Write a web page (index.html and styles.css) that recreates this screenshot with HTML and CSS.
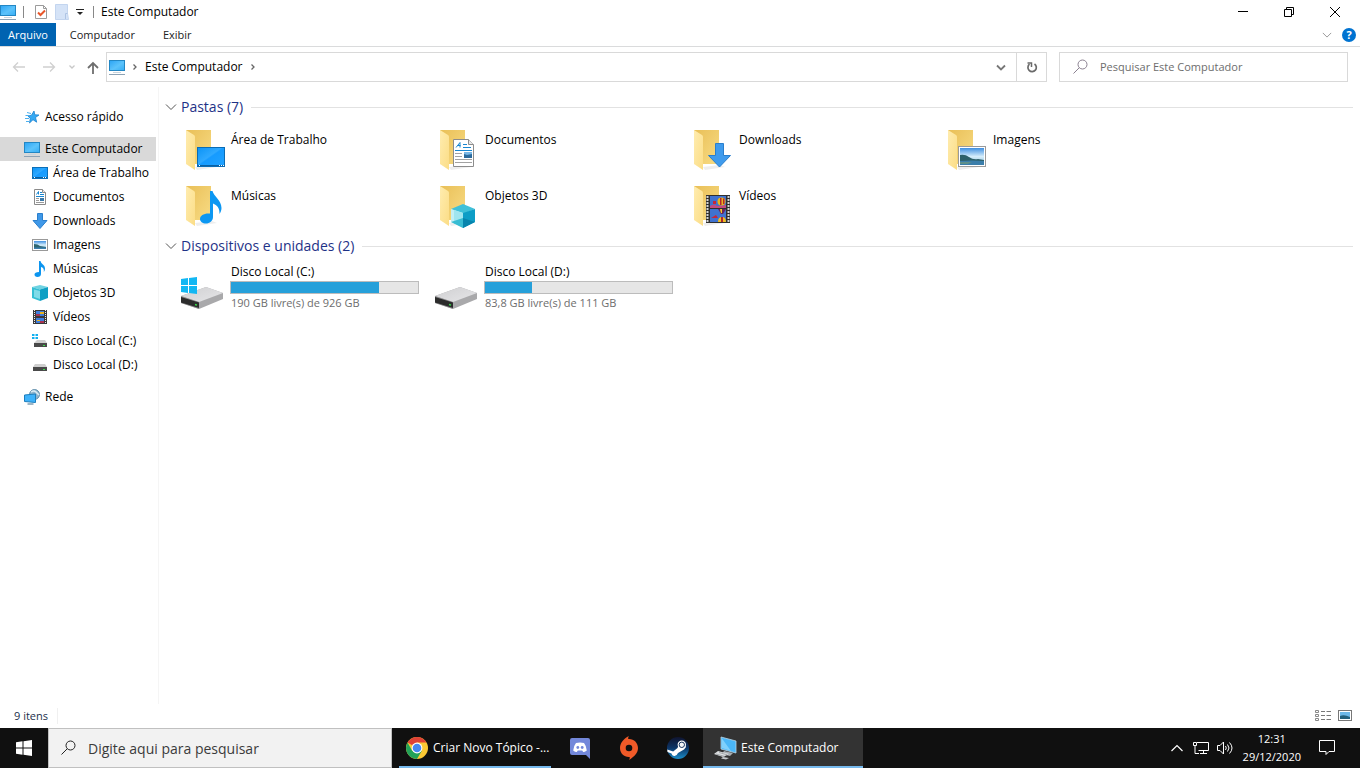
FILE: index.html
```html
<!DOCTYPE html>
<html lang="pt-BR">
<head>
    <meta charset="UTF-8">
    <meta name="viewport" content="width=device-width, initial-scale=1.0">
    <title>Este Computador</title>
    <link rel="stylesheet" href="styles.css">
</head>
<body>
    <!-- Shared icons -->
    <svg class="sprite" width="0" height="0" aria-hidden="true">
        <defs>
            <linearGradient id="gScreen" x1="0" y1="0" x2="1" y2="1">
                <stop offset="0" stop-color="#2ba4f5"/>
                <stop offset=".55" stop-color="#5cc3fb"/>
                <stop offset="1" stop-color="#34adf5"/>
            </linearGradient>
            <linearGradient id="gDesk" x1="0" y1="0" x2="1" y2="1">
                <stop offset="0" stop-color="#0b93f5"/>
                <stop offset=".45" stop-color="#2fa9ff"/>
                <stop offset=".5" stop-color="#169bff"/>
                <stop offset="1" stop-color="#22a3ff"/>
            </linearGradient>
            <linearGradient id="gBack" x1="0" y1="0" x2="1" y2="1">
                <stop offset="0" stop-color="#e9bf57"/>
                <stop offset="1" stop-color="#f8dc85"/>
            </linearGradient>
            <linearGradient id="gFlap" x1="0" y1="0" x2="1" y2="1">
                <stop offset="0" stop-color="#ffecaf"/>
                <stop offset="1" stop-color="#fbdd86"/>
            </linearGradient>
            <linearGradient id="gDriveTop" x1="0" y1="0" x2="1" y2="1">
                <stop offset="0" stop-color="#cfcfd1"/>
                <stop offset="1" stop-color="#e6e6e8"/>
            </linearGradient>
            <linearGradient id="gSky" x1="0" y1="0" x2="0" y2="1">
                <stop offset="0" stop-color="#3f8fe0"/>
                <stop offset=".5" stop-color="#d5edfb"/>
                <stop offset="1" stop-color="#8cc0dc"/>
            </linearGradient>
            <linearGradient id="gSteam" x1="0" y1="0" x2="0" y2="1">
                <stop offset="0" stop-color="#10142f"/>
                <stop offset=".5" stop-color="#0c3567"/>
                <stop offset="1" stop-color="#1b8ec9"/>
            </linearGradient>
        </defs>

        <symbol id="pc" viewBox="0 0 16 16">
            <rect x=".5" y="1.5" width="15" height="10" fill="url(#gScreen)" stroke="#2387c4"/>
            <path d="M0 15.5h16" stroke="#8ea3b5"/>
            <path d="M4 13.5h8" stroke="#c9d4dd"/>
        </symbol>
        <symbol id="desktop" viewBox="0 0 16 16">
            <rect x=".5" y="2.5" width="15" height="11" fill="url(#gDesk)" stroke="#0b6fb8"/>
            <path d="M1 12.5h14" stroke="#0b5f9e"/>
            <path d="M2 12.5h1M11 12.5h1M13 12.5h1" stroke="#fff"/>
        </symbol>
        <symbol id="doc" viewBox="0 0 16 16">
            <path d="M2.5 .5h8l3 3v12h-11z" fill="#fff" stroke="#8a8a8a"/>
            <path d="M10.5 .5v3h3" fill="#eee" stroke="#8a8a8a"/>
            <path d="M4.5 5.5l2-3v3M8 3.5h2M8 5.5h4M4 7.5h8" fill="none" stroke="#1886d0"/>
            <path d="M4 9.500h3M4 11.5h3M4 13.5h8" stroke="#9a9a9a"/>
            <path d="M8 9h4v3H8z" fill="#3a78a8"/>
        </symbol>
        <symbol id="down" viewBox="0 0 16 16">
            <path d="M5.5 .5h5v7H15l-7 8-7-8h4.5z" fill="#3f98e8" stroke="#2a7fcd"/>
        </symbol>
        <symbol id="pic" viewBox="0 0 16 16">
            <rect x=".5" y="2.5" width="15" height="11" fill="#fff" stroke="#999"/>
            <path d="M2 4h12v8H2z" fill="url(#gSky)"/>
            <path d="M2 7q4 0 6 2l6 1v2H2z" fill="#2e6670"/>
            <path d="M2 10.5h12V12H2z" fill="#3c7fae"/>
        </symbol>
        <symbol id="note" viewBox="0 0 16 16">
            <path d="M7 0h1.500c.5 3 4.500 3.500 4.500 7.500 0 1.500-.5 2.500-1.200 3.500.5-3-.8-4.500-2.800-5v7c0 1.800-1.500 3-3.500 3S2.500 15 2.500 13.500 4 11 7 11z" fill="#0c95ef"/>
        </symbol>
        <symbol id="cube" viewBox="0 0 16 16">
            <path d="M0 2l8-2 8 2-8 2.500z" fill="#6fd3e2"/>
            <path d="M0 2l8 2.500V16l-8-3z" fill="#35bfd4"/>
            <path d="M2 4.500l6 1.500v8l-6-2z" fill="#7fdbe8"/>
            <path d="M8 4.500L16 2v11l-8 3z" fill="#0e9fc4"/>
        </symbol>
        <symbol id="film" viewBox="0 0 16 16">
            <path d="M1 1h14v14H1z" fill="#3a3a3a"/>
            <path d="M4 2h8v5H4zM4 9h8v5H4z" fill="#3f7ddb"/>
            <path d="M2.500 1v14M13.500 1v14" stroke="#eee" stroke-dasharray="1 1"/>
            <path d="M8 3h4v2H8zM5 11h3v1H5z" fill="#e9b31d"/>
            <path d="M4 5h4v2H4zM8 12h4v2H8z" fill="#a83350"/>
        </symbol>
        <symbol id="disk" viewBox="0 0 16 16">
            <path d="M3 7h10l2 3H1z" fill="#cfcfcf"/>
            <path d="M1 10h14v4H1z" fill="#4a4a4a"/>
            <path d="M11 12.500h2" stroke="#3be04a"/>
        </symbol>
        <symbol id="diskwin" viewBox="0 0 16 16">
            <path d="M5 7h8l2 3H2z" fill="#cfcfcf"/>
            <path d="M2 10h13v4H2z" fill="#4a4a4a"/>
            <path d="M11 12.500h2" stroke="#3be04a"/>
            <path d="M0 1h2.500v2H0zM3.500 1H6v2H3.500zM0 4h2.500v2H0zM3.500 4H6v2H3.500z" fill="#12b0f0"/>
        </symbol>
        <symbol id="star" viewBox="0 0 16 16">
            <path d="M10 2l.8 3.800 4.200.2-3.500 2.500 1.200 4.700-3.700-2.500L5.500 14l.8-4.500-2.300-2.500 3.500-.8z" fill="#35a9f3" stroke="#1c82cf" stroke-width=".8"/>
            <path d="M3 3.500l4 1M1.500 6.500h4M1 9.500h4M2 12.500h3" stroke="#4cb0ee"/>
        </symbol>
        <symbol id="net" viewBox="0 0 16 16">
            <circle cx="10.500" cy="5.500" r="5" fill="#8fb4cc" stroke="#4a7d9e" stroke-width=".8"/>
            <path d="M7 3q3-2 5 0t3 3" fill="none" stroke="#dcecf4" stroke-width="1.500"/>
            <path d="M.5 6l11-1v8.500L.5 12.500z" fill="#3eb2fa" stroke="#1d7ebd"/>
            <path d="M3.500 15h6" stroke="#3c6c8c"/>
        </symbol>
        <symbol id="folder" viewBox="0 0 48 48">
            <path d="M14 42l17-2 5 2-20 3z" fill="#eee"/>
            <path d="M5 5h25v34H12z" fill="url(#gBack)"/>
            <path d="M5 5l8 5q1 .5 1 2v33l-9-6z" fill="url(#gFlap)"/>
        </symbol>
        <symbol id="drive" viewBox="0 0 48 48">
            <path d="M0 32l25-9 17 6v6l-24 10-18-6z" fill="#a9a9ab"/>
            <path d="M0 32l25-9 17 6-24 9z" fill="url(#gDriveTop)"/>
            <path d="M0 32l18 6v7L0 39z" fill="#8c8c8e"/>
            <path d="M0 33l18 5.500v5.500L0 38.500z" fill="#2c2c2c"/>
            <path d="M14 40.500l2 .6" stroke="#39e04a" stroke-width="1.500"/>
        </symbol>
        <symbol id="chev" viewBox="0 0 12 12">
            <path d="M1 3.500l5 5 5-5" fill="none" stroke="currentColor"/>
        </symbol>
        <symbol id="sep" viewBox="0 0 8 8">
            <path d="M2.500 1.500L5 4 2.500 6.500" fill="none" stroke="#666" stroke-width="1.300"/>
        </symbol>
        <symbol id="lens" viewBox="0 0 16 16">
            <circle cx="10.500" cy="5.500" r="4.500" fill="none" stroke="currentColor"/>
            <path d="M7.300 8.700L1.500 14.500" stroke="currentColor"/>
        </symbol>
    </svg>

    <header class="titlebar">
        <svg class="icon"><use href="#pc"/></svg>
        <span class="divider"></span>
        <button class="quick" aria-label="Propriedades">
            <svg width="14" height="16" viewBox="0 0 14 16"><path d="M1.500 1.500h8l3 3v10h-11z" fill="#fff" stroke="#9b9b9b"/><path d="M9.500 1.500v3h3" fill="none" stroke="#9b9b9b"/><path d="M4 8.500l2.500 2.500L11 6.500" fill="none" stroke="#e8562a" stroke-width="2"/></svg>
        </button>
        <button class="quick" aria-label="Nova pasta">
            <svg width="14" height="16" viewBox="0 0 14 16"><path d="M.5 .5h12v9l1 6H.5z" fill="#d5e3f7" stroke="#c3d5ef"/><path d="M10.500 15V9.500h2" fill="none" stroke="#aec4e4"/></svg>
        </button>
        <button class="quick" aria-label="Personalizar">
            <svg width="8" height="8" viewBox="0 0 8 8"><path d="M0 1.500h8" stroke="#222"/><path d="M1 4h6L4 7z" fill="#222"/></svg>
        </button>
        <span class="divider"></span>
        <h1 class="title">Este Computador</h1>
        <div class="window-buttons">
            <button aria-label="Minimizar"><svg width="10" height="10"><path d="M0 4.500h10" stroke="#000"/></svg></button>
            <button aria-label="Restaurar"><svg width="10" height="10"><path d="M.5 2.500h7v7h-7zM2.500 2.500v-2h7v7h-2" fill="none" stroke="#000"/></svg></button>
            <button aria-label="Fechar"><svg width="10" height="10"><path d="M0 0l10 10M10 0L0 10" stroke="#000"/></svg></button>
        </div>
    </header>

    <nav class="tabs">
        <button class="tab active">Arquivo</button>
        <button class="tab">Computador</button>
        <button class="tab">Exibir</button>
        <div class="tabs-right">
            <button aria-label="Expandir a faixa de opções"><svg class="chev-small"><use href="#chev"/></svg></button>
            <button class="help" aria-label="Ajuda">?</button>
        </div>
    </nav>

    <div class="toolbar">
        <div class="history">
            <button aria-label="Voltar"><svg width="14" height="12" viewBox="0 0 14 12"><path d="M13 6H1.500M6 1.500L1.500 6 6 10.500" fill="none" stroke="#d0d0d0" stroke-width="1.300"/></svg></button>
            <button aria-label="Avançar"><svg width="14" height="12" viewBox="0 0 14 12"><path d="M1 6h11.500M8 1.500L12.500 6 8 10.500" fill="none" stroke="#d0d0d0" stroke-width="1.300"/></svg></button>
            <button class="recent" aria-label="Locais recentes"><svg width="8" height="8" viewBox="0 0 8 8"><path d="M1.500 2.500L4 5l2.500-2.500" fill="none" stroke="#c8c8c8" stroke-width="1.300"/></svg></button>
            <button class="up" aria-label="Para cima"><svg width="12" height="14" viewBox="0 0 12 14"><path d="M6 14V3M1 8l5-5 5 5" fill="none" stroke="#6e6e6e" stroke-width="1.800"/></svg></button>
        </div>
        <div class="address">
            <svg class="icon"><use href="#pc"/></svg>
            <svg class="crumb"><use href="#sep"/></svg>
            <a href="#">Este Computador</a>
            <svg class="crumb"><use href="#sep"/></svg>
            <button class="drop" aria-label="Locais anteriores"><svg width="10" height="8" viewBox="0 0 10 8"><path d="M1 2.500l4 4 4-4" fill="none" stroke="#777" stroke-width="1.800"/></svg></button>
            <button class="refresh" aria-label="Atualizar"><svg width="12" height="12" viewBox="0 0 12 12"><path d="M8.500 3A4.200 4.200 0 1 1 3.500 3.200" fill="none" stroke="#6a6a6a" stroke-width="1.700"/><path d="M1.500 2h4v4" fill="none" stroke="#6a6a6a" stroke-width="1.500"/></svg></button>
        </div>
        <label class="search">
            <svg class="lens"><use href="#lens"/></svg>
            <input type="text" placeholder="Pesquisar Este Computador" aria-label="Pesquisar Este Computador">
        </label>
    </div>

    <main class="explorer">
        <nav class="tree">
            <a href="#"><svg class="icon"><use href="#star"/></svg>Acesso rápido</a>
            <div class="branch">
                <a href="#" class="selected"><svg class="icon"><use href="#pc"/></svg>Este Computador</a>
                <a href="#" class="child"><svg class="icon"><use href="#desktop"/></svg>Área de Trabalho</a>
                <a href="#" class="child"><svg class="icon"><use href="#doc"/></svg>Documentos</a>
                <a href="#" class="child"><svg class="icon"><use href="#down"/></svg>Downloads</a>
                <a href="#" class="child"><svg class="icon"><use href="#pic"/></svg>Imagens</a>
                <a href="#" class="child"><svg class="icon"><use href="#note"/></svg>Músicas</a>
                <a href="#" class="child"><svg class="icon"><use href="#cube"/></svg>Objetos 3D</a>
                <a href="#" class="child"><svg class="icon"><use href="#film"/></svg>Vídeos</a>
                <a href="#" class="child"><svg class="icon"><use href="#diskwin"/></svg>Disco Local (C:)</a>
                <a href="#" class="child"><svg class="icon"><use href="#disk"/></svg>Disco Local (D:)</a>
            </div>
            <a href="#"><svg class="icon"><use href="#net"/></svg>Rede</a>
        </nav>

        <div class="content">
            <section class="group">
                <h2><svg class="chev"><use href="#chev"/></svg>Pastas (7)</h2>
                <div class="tiles">
                    <a href="#" class="tile">
                        <svg viewBox="0 0 48 48"><use href="#folder"/><rect x="16.500" y="22.500" width="27" height="19" fill="url(#gDesk)" stroke="#0a6cb5"/><path d="M17 40.500h26" stroke="#0a60a3"/><path d="M18 40.500h1M38 40.500h1M40 40.500h1M42 40.500h1" stroke="#fff"/></svg>
                        <span>Área de Trabalho</span>
                    </a>
                    <a href="#" class="tile">
                        <svg viewBox="0 0 48 48"><use href="#folder"/><path d="M18.500 14.500h15l5 5v22h-20z" fill="#fff" stroke="#8c8c8c"/><path d="M33.500 14.500v5h5" fill="#e8e8e8" stroke="#8c8c8c"/><path d="M21 22.500l4-5v5M22.500 20.500h3M28 19.500h4M28 22.500h8M20 25.500h17" fill="none" stroke="#1886d0"/><path d="M20 28.500h7M20 31.500h7M20 34.500h17M20 37.500h17" stroke="#a2a2a2"/><path d="M29 27h8v6h-8z" fill="#2c6a9c"/><path d="M29 27h8v2l-5 1-3-1z" fill="#78b7e6"/></svg>
                        <span>Documentos</span>
                    </a>
                    <a href="#" class="tile">
                        <svg viewBox="0 0 48 48"><use href="#folder"/><path d="M26.500 18.500h8v12h7L30.500 42l-11-11.500h7z" fill="#3f9bed" stroke="#2a7fcd"/></svg>
                        <span>Downloads</span>
                    </a>
                    <a href="#" class="tile">
                        <svg viewBox="0 0 48 48"><use href="#folder"/><rect x="15.500" y="21.500" width="27" height="20" fill="#fff" stroke="#9a9a9a"/><path d="M17 23h24v17H17z" fill="url(#gSky)"/><path d="M17 30q5-1 9 2t9 2l6 1v3H17z" fill="#2d6069"/><path d="M17 36q12-1 24 0v4H17z" fill="#3b7eaa"/><path d="M17 37h12l-4 2h-8z" fill="#5d8f8a"/></svg>
                        <span>Imagens</span>
                    </a>
                    <a href="#" class="tile">
                        <svg viewBox="0 0 48 48"><use href="#folder"/><path d="M29 10h2.500c1 5 9 9 9 17 0 2-.6 4-2 6 .3-6-2.500-9-6.500-10.500V36c0 4-3.500 6.500-7 6.500S19 40.500 19 38c0-3.500 4-6 10-5.500z" fill="#0c97f2"/></svg>
                        <span>Músicas</span>
                    </a>
                    <a href="#" class="tile">
                        <svg viewBox="0 0 48 48"><use href="#folder"/><path d="M16 28l12-5 12 5-12 5z" fill="#3fc0d8"/><path d="M16 28l12 4v15l-12-6z" fill="#c3eff5"/><path d="M19 29l9 3v9l-9 2z" fill="#a0e5ef"/><path d="M16 41l12-4v10z" fill="#38bcd3"/><path d="M28 32l12-4v13l-12 6z" fill="#0d9dc6"/><path d="M28 37l12 4-12 6z" fill="#0784ad"/></svg>
                        <span>Objetos 3D</span>
                    </a>
                    <a href="#" class="tile">
                        <svg viewBox="0 0 48 48"><use href="#folder"/><path d="M17 14h24v28H17z" fill="#2f2f2f"/><path d="M18.500 15v27M39.500 15v27" stroke="#d4d4d4" stroke-width="2" stroke-dasharray="2 1"/><path d="M21 15h16v12H21zM21 28h16v13H21z" fill="#3f72d0"/><path d="M21 25q4-3 7 0l9-1v3H21z" fill="#c14b80"/><circle cx="32.500" cy="20.500" r="4" fill="#e9b31d"/><path d="M31 17h1.500v7H31zM34 17.500h1.500V23H34z" fill="#b3262e"/><path d="M29 28h8l-3 5h-2z" fill="#6b2558"/><path d="M31 28h2v4h-1z" fill="#f2cf2d"/><path d="M24 20h3v3h-3zM22 37l5-3 2 3z" fill="#c6263a"/><path d="M29 41q0-5 4-5t4 5z" fill="#f0bd20"/><path d="M32 36h2v5h-2z" fill="#b3262e"/></svg>
                        <span>Vídeos</span>
                    </a>
                </div>
            </section>

            <section class="group">
                <h2><svg class="chev"><use href="#chev"/></svg>Dispositivos e unidades (2)</h2>
                <div class="tiles">
                    <a href="#" class="tile drive">
                        <svg viewBox="0 0 48 48"><use href="#drive"/><path d="M0 15l7-1v7H0zM8 14l8-1v8H8zM0 22h7v7l-7-1zM8 22h8v8l-8-1z" fill="#12b7f3"/></svg>
                        <span class="drive-info">
                            <span>Disco Local (C:)</span>
                            <span class="bar"><span class="used" style="width: 79%"></span></span>
                            <span class="free">190 GB livre(s) de 926 GB</span>
                        </span>
                    </a>
                    <a href="#" class="tile drive">
                        <svg viewBox="0 0 48 48"><use href="#drive"/></svg>
                        <span class="drive-info">
                            <span>Disco Local (D:)</span>
                            <span class="bar"><span class="used" style="width: 25%"></span></span>
                            <span class="free">83,8 GB livre(s) de 111 GB</span>
                        </span>
                    </a>
                </div>
            </section>
        </div>
    </main>

    <footer class="statusbar">
        <span class="count">9 itens</span>
        <div class="views">
            <button aria-label="Detalhes"><svg width="16" height="12" viewBox="0 0 16 12"><path d="M.5 .5v2h3v-2zM.5 4.500v2h3v-2zM.5 8.500v2h3v-2z" fill="none" stroke="#888"/><path d="M6 1.500h4M11.500 1.500H16M6 5.500h4M11.500 5.500H16M6 9.500h4M11.500 9.500H16" stroke="#777"/></svg></button>
            <button aria-label="Ícones grandes"><svg width="14" height="12" viewBox="0 0 14 12"><rect x=".5" y=".5" width="13" height="10" fill="#fff" stroke="#777"/><path d="M2 2h10v7H2z" fill="#6db8e8"/><path d="M2 6q4-2 10 1v2H2z" fill="#23607c"/></svg></button>
        </div>
    </footer>

    <div class="taskbar">
        <button class="start" aria-label="Iniciar"><svg width="16" height="16" viewBox="0 0 16 16"><path d="M0 2.200L6.500 1.300v6.200H0zM7.500 1.200L16 0v7.500H7.500zM0 8.500h6.500v6.200L0 13.800zM7.500 8.500H16V16l-8.500-1.200z" fill="#fff"/></svg></button>
        <label class="task-search">
            <svg class="lens"><use href="#lens"/></svg>
            <input type="text" placeholder="Digite aqui para pesquisar" aria-label="Digite aqui para pesquisar">
        </label>
        <button class="task open">
            <svg width="24" height="24" viewBox="0 0 24 24"><circle cx="12" cy="12" r="11" fill="#fbc934"/><path d="M12 12L2.500 6.500A11 11 0 0 1 21.500 6.500H12z" fill="#df4236"/><path d="M2.500 6.500A11 11 0 0 0 12 23l5-8.500-5 2.500-5-2.500z" fill="#22a259"/><circle cx="12" cy="12" r="5.400" fill="#fff"/><circle cx="12" cy="12" r="4.300" fill="#4688f1"/></svg>
            <span>Criar Novo Tópico -...</span>
        </button>
        <button class="app" aria-label="Discord"><svg width="22" height="24" viewBox="0 0 22 24"><path d="M3 2h16q2 0 2 2v19l-4-4H3q-2 0-2-2V4q0-2 2-2z" fill="#7388da"/><path d="M7 7q4-1 8 0 2.500 3 2.800 7.500-2 1.500-3.600 1.500l-1-1.500H8.800l-1 1.500Q6 16 4.200 14.500 4.500 10 7 7z" fill="#fff"/><circle cx="8.800" cy="11.500" r="1.400" fill="#7388da"/><circle cx="13.200" cy="11.500" r="1.400" fill="#7388da"/></svg></button>
        <button class="app" aria-label="Origin"><svg width="24" height="24" viewBox="0 0 24 24"><path d="M12 0c-.8 1-.9 2-.7 3C16.500 2.500 21 6.500 21 12c0 5-3.500 8.500-9 12 .7-1.200.9-2 .6-3C7.500 21.500 3 17.500 3 12 3 7 6.500 2.800 12 0z" fill="#f05a28"/><circle cx="12" cy="12" r="3.300" fill="#101010"/></svg></button>
        <button class="app" aria-label="Steam"><svg width="24" height="24" viewBox="0 0 24 24"><circle cx="12" cy="12" r="11" fill="url(#gSteam)"/><path d="M1.200 13.500l6 2 4.300-3.500 2-5h4l2.500 4-2 2.500-6 3.500q-1.500 3.500-4 3-2-.5-2.500-2.500l-4-1.500z" fill="#fff"/><circle cx="15.800" cy="8.800" r="4.200" fill="#fff"/><circle cx="15.800" cy="8.800" r="2.700" fill="#f4f6f8" stroke="#14315c"/></svg></button>
        <button class="task open current">
            <svg width="24" height="24" viewBox="0 0 24 24"><path d="M8 1l15 4v12L8 13z" fill="#4bb7f8" stroke="#b9d4e4" stroke-width=".8"/><path d="M9 12V2.500L18 15z" fill="#7fd0fc"/><path d="M11 15l9 2-3 3-8-2z" fill="#a8adb1"/><path d="M5 15l11 3-6 3-9-3z" fill="#dde0e2"/><path d="M3 18l9 2.500M6 16.500l8 2.300" stroke="#8b9094" stroke-width=".7"/><path d="M10 21l6 1-3 1.500-5-1z" fill="#c5c9cc"/></svg>
            <span>Este Computador</span>
        </button>
        <div class="tray">
            <button aria-label="Mostrar ícones ocultos"><svg width="12" height="8" viewBox="0 0 12 8"><path d="M.5 7L6 1.500 11.500 7" fill="none" stroke="#fff" stroke-width="1.200"/></svg></button>
            <button class="network" aria-label="Rede"><svg width="16" height="16" viewBox="0 0 16 16"><path d="M4 2.500h11.500v8H5.500M10.500 10.500v3M7 13.500h7" fill="none" stroke="#fff"/><path d="M.5 2.500h3v3h-3zM2 5.500v8h4" fill="none" stroke="#fff"/></svg></button>
            <button aria-label="Volume"><svg width="16" height="16" viewBox="0 0 16 16"><path d="M.5 5.500h2.500l3.500-3.500v12L3 10.500H.5z" fill="none" stroke="#fff"/><path d="M8.500 6q1.500 2 0 4M10.500 4.500q3 3.500 0 7M12.500 2.500q5 5.500 0 11" fill="none" stroke="#fff"/></svg></button>
            <div class="clock"><span>12:31</span><span>29/12/2020</span></div>
            <button class="notice" aria-label="Notificações"><svg width="16" height="16" viewBox="0 0 16 16"><path d="M.5 .5h15v11H10l-3 3v-3H.5z" fill="none" stroke="#fff"/></svg></button>
        </div>
    </div>
</body>
</html>
```
FILE: styles.css
```css
* {
    box-sizing: border-box;
}
body {
    margin: 0;
    min-height: 100vh;
    display: flex;
    flex-direction: column;
    background: #fff;
    color: #000;
    font-family: 'Open Sans', 'Noto Sans', sans-serif;
    font-size: 12px;
    line-height: 16px;
}
button {
    display: flex;
    align-items: center;
    justify-content: center;
    padding: 0;
    border: none;
    background: none;
    color: inherit;
    font: inherit;
}
a {
    color: inherit;
    text-decoration: none;
}
input {
    flex: 1;
    min-width: 0;
    padding: 0;
    border: none;
    outline: none;
    background: none;
    font: inherit;
}
svg {
    flex: none;
    display: block;
}
.sprite {
    position: absolute;
}
.icon, .lens {
    width: 16px;
    height: 16px;
}

/* Title bar */
.titlebar {
    display: flex;
    align-items: center;
    height: 23px;
}
.divider {
    width: 1px;
    height: 12px;
    margin: 0 7px;
    background: #888;
}
.quick {
    width: 22px;
}
.divider + .quick {
    width: 20px;
}
.quick + .quick + .quick {
    width: 14px;
}
.quick + .divider {
    margin-left: 6px;
}
.title {
    margin: 0;
    font-size: 12px;
    font-weight: normal;
}
.window-buttons {
    display: flex;
    margin-left: auto;
    margin-right: 2px;
}
.window-buttons button {
    width: 46px;
    height: 22px;
}

/* Ribbon tabs */
.tabs {
    display: flex;
    height: 24px;
    border-bottom: 1px solid #dadbdc;
    font-size: 11px;
}
.tab {
    padding: 0 14px;
    color: #222;
}
.tab.active {
    padding: 0 8px;
    background: #0063b1;
    color: #fff;
}
.tabs-right {
    display: flex;
    align-items: center;
    gap: 10px;
    margin-left: auto;
    padding-right: 4px;
}
.chev-small {
    width: 10px;
    height: 10px;
    color: #888;
}
.help {
    width: 14px;
    height: 14px;
    border-radius: 50%;
    background: #0073d1;
    color: #fff;
    font-weight: bold;
}

/* Address row */
.toolbar {
    display: flex;
    align-items: center;
    gap: 12px;
    height: 40px;
    padding-right: 12px;
}
.history {
    display: flex;
    width: 94px;
    padding-left: 12px;
    gap: 16px;
}
.recent {
    margin-left: -4px;
}
.up {
    margin-left: -5px;
}
.address, .search {
    display: flex;
    align-items: center;
    height: 30px;
    border: 1px solid #d9d9d9;
}
.address {
    flex: 1;
    padding-left: 2px;
}
.crumb {
    width: 8px;
    height: 8px;
    margin: 0 6px;
}
.drop {
    width: 30px;
    height: 28px;
    margin-left: auto;
}
.refresh {
    width: 30px;
    height: 28px;
    border-left: 1px solid #d9d9d9;
}
.search {
    width: 289px;
    padding-left: 12px;
    gap: 12px;
    color: #8a8090;
    font-size: 11px;
}
.search input::placeholder {
    color: #6d6d6d;
    opacity: 1;
}

/* Navigation tree and content */
.explorer {
    flex: 1;
    display: flex;
}
.tree {
    width: 159px;
    padding: 18px 2px 0 0;
    border-right: 1px solid #f5f5f5;
}
.tree a {
    display: flex;
    align-items: center;
    gap: 5px;
    height: 24px;
    padding-left: 24px;
    white-space: nowrap;
}
.tree .child {
    padding-left: 32px;
}
.tree .selected {
    background: #d9d9d9;
}
.branch {
    margin: 8px 0;
}
.content {
    flex: 1;
    padding: 10px 7px 0 6px;
}
.group {
    margin-bottom: 7px;
}
.group h2 {
    display: flex;
    align-items: center;
    gap: 4px;
    margin: 0 0 8px;
    color: #1e3287;
    font-size: 14px;
    font-weight: normal;
    line-height: 20px;
}
.group h2::after {
    content: "";
    flex: 1;
    height: 1px;
    margin-left: 4px;
    background: #e2e2e2;
}
.chev {
    width: 12px;
    height: 12px;
    color: #555;
}
.tiles {
    display: grid;
    grid-template-columns: repeat(auto-fill, 254px);
    row-gap: 8px;
    padding-left: 16px;
}
.tile {
    display: flex;
    gap: 2px;
}
.tile svg {
    width: 48px;
    height: 48px;
}
.tile > span {
    padding-top: 7px;
}
.tile .drive-info {
    display: flex;
    flex-direction: column;
    padding-top: 0;
}
.bar {
    width: 189px;
    height: 13px;
    margin: 1px -1px;
    border: 1px solid #bcbcbc;
    background: #e6e6e6;
}
.used {
    display: block;
    height: 100%;
    background: #26a0da;
}
.free {
    color: #6d6d6d;
    font-size: 11px;
}

/* Status bar */
.statusbar {
    display: flex;
    align-items: center;
    justify-content: space-between;
    height: 24px;
    padding: 0 8px 0 14px;
}
.count {
    padding-right: 9px;
    border-right: 1px solid #f0f0f0;
    color: #1b2f4b;
    font-size: 11px;
}
.views {
    display: flex;
    gap: 7px;
}

/* Taskbar */
.taskbar {
    display: flex;
    height: 40px;
    background: #101010;
    color: #fff;
}
.start {
    width: 48px;
}
.task-search {
    display: flex;
    align-items: center;
    width: 344px;
    padding-left: 11px;
    gap: 12px;
    border: 1px solid #c0c0c0;
    background: #f2f2f2;
    color: #222;
    font-size: 14px;
}
.task-search input {
    height: 24px;
}
.task-search input::placeholder {
    color: #3b3b3b;
    opacity: 1;
}
.task {
    justify-content: flex-start;
    gap: 4px;
    width: 152px;
    padding: 2px 6px 0;
    border-bottom: 2px solid #76b9ed;
    white-space: nowrap;
}
.task-search + .task {
    margin: 0 4px 0 7px;
}
.task.current {
    width: 160px;
    margin-left: 1px;
    padding-left: 10px;
    background: #333;
}
.app {
    width: 49px;
}
.tray {
    display: flex;
    align-items: center;
    gap: 8px;
    margin-left: auto;
    padding-right: 25px;
}
.network {
    margin-left: 2px;
}
.clock {
    display: flex;
    flex-direction: column;
    align-items: center;
    margin-left: 2px;
    font-size: 11px;
    line-height: 18px;
}
.notice {
    margin-left: 10px;
}
```
